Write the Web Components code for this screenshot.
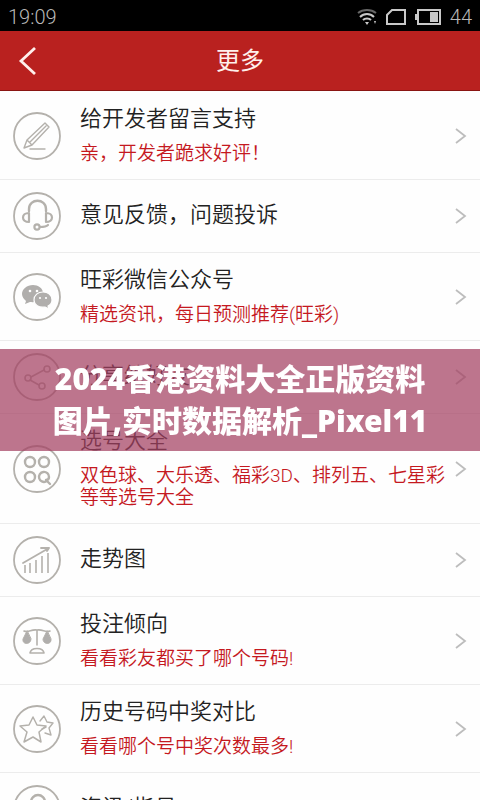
<!DOCTYPE html>
<html lang="zh-CN">
<head>
<meta charset="utf-8">
<meta name="viewport" content="width=device-width, initial-scale=1">
<title>更多</title>
<style>
  html { height: 100%; overflow: hidden; }
  body { margin: 0; height: 100%; overflow: hidden; background: #fefefe; font-family: Roboto, "Noto Sans CJK SC", sans-serif; }
</style>
</head>
<body>
<more-page></more-page>
<script>
const svg = (inner) => `<svg viewBox="0 0 48 48" fill="none" stroke="#b4b1ac" stroke-width="1.6" stroke-linecap="round" stroke-linejoin="round" aria-hidden="true"><circle cx="24" cy="24" r="23" stroke-width="1.8"/>${inner}</svg>`;
const ICONS = {
  pen: svg(`<path d="M11 36l3-8 18-17 4 4-17 18zM14 28l5 5M17 30l16-16M17 37h15" stroke-width="1.4"/>`),
  headset: svg(`<path d="M16 19v-2c0-11 17-11 17 0v2" stroke-width="2.4"/><path d="M16 21v9c-8 0-8-9 0-9zM33 21v9c8 0 8-9 0-9z" stroke-width="2.2"/><circle cx="24" cy="35" r="2.6" stroke-width="2.2"/><path d="M27 35c3 0 6 0 8-2" stroke-width="2.2"/>`),
  wechat: svg(`<g fill="#b0aeac" stroke="none"><path d="M20 12c-6 0-11 4-11 9 0 3 2 5 4 7l-1 3 5-2c8 1 13-3 13-9 0-5-5-8-10-8z"/><path stroke="#fefefe" stroke-width="1.2" d="M30 19c-5 0-9 3-9 8s5 8 11 7l4 2-1-3c2-1 4-3 4-6 0-5-4-8-9-8z"/></g><g fill="#fefefe" stroke="none"><circle cx="17" cy="18" r="1.3"/><circle cx="24" cy="18" r="1.3"/><circle cx="27" cy="25" r="1.1"/><circle cx="33" cy="25" r="1.1"/></g>`),
  share: svg(`<circle cx="15" cy="25" r="3"/><circle cx="34" cy="16" r="3"/><circle cx="29" cy="33" r="3"/><path d="M18 24l13-7M17 27l9 5"/>`),
  numbers: svg(`<g stroke-width="2.4"><circle cx="17" cy="17" r="5"/><circle cx="31" cy="17" r="5"/><circle cx="17" cy="32" r="5"/><path d="M33 36.500a5 5 0 1 1 3-4.500c0 2-1 3-3 3l4 4"/></g>`),
  trend: svg(`<path d="M10 27l26-15M28 12h8l-2 3" stroke-width="1.8"/><path d="M12 29v8M17 27v10M23 24v13M29 20v17M35 17v20" stroke-width="1.6" stroke-linecap="butt"/>`),
  scales: svg(`<path d="M11 14c5 2 7-2 13-1 6-1 8 3 13 1M24 13v15"/><g fill="#b0aeac" stroke-width="1"><path d="M14 14l-4 8c-1 6 8 6 8 0z"/><path d="M34 14l-4 8c0 6 9 6 8 0z"/></g><path d="M17 36c1-6 13-6 14 0z"/>`),
  stars: svg(`<path d="M20 12l4 8 9 1-7 6 2 10-8-5-9 5 3-10-7-6 9-1z" stroke-width="1.5"/><path d="M27 16l4-5 3 6 6 1-4 5 2 7-6-2M29 24l4-2" stroke-width="1.4"/>`),
  person: svg(`<circle cx="25" cy="17" r="7" stroke-width="2.4"/><path d="M11 38c3-14 25-14 28 0"/>`),
};

class StatusBar extends HTMLElement {
  constructor() {
    super();
    this.attachShadow({ mode: 'open' }).innerHTML = `
      <style>
        :host { display: flex; align-items: center; justify-content: space-between; height: 31px; box-sizing: border-box; padding: 2px 8px 0; background: #000; color: #b9b9b9; font: 300 20px/24px Roboto, sans-serif; }
        .right { display: flex; align-items: center; gap: 9px; }
        svg { display: block; }
      </style>
      <span>19:09</span>
      <div class="right">
        <svg width="20" height="16" viewBox="0 0 20 16" fill="none" stroke="#c9c9c9" stroke-width="2"><path d="M1 4c5-4 13-4 18 0" stroke="#666"/><path d="M3 8c4-4 10-4 14 0M6 11c2-2 6-2 8 0"/><path d="M8 13h4l-2 3zM17 12h2l-1 3z" fill="#c9c9c9" stroke="none"/></svg>
        <svg width="20" height="16" viewBox="0 0 20 16" fill="none" stroke="#c9c9c9" stroke-width="2"><path d="M6 1h13v14H1V6z"/></svg>
        <svg width="26" height="16" viewBox="0 0 26 16" fill="none" stroke="#c9c9c9" stroke-width="2"><path d="M3 1h22v14H3z"/><path d="M0 5h3v6H0zM15 3h8v10h-8z" fill="#c9c9c9" stroke="none"/></svg>
        <span>44</span>
      </div>`;
  }
}
customElements.define('status-bar', StatusBar);

class NavBar extends HTMLElement {
  constructor() {
    super();
    this.attachShadow({ mode: 'open' }).innerHTML = `
      <style>
        :host { display: grid; grid-template-columns: 56px 1fr 56px; align-items: center; height: 60px; box-sizing: border-box; background: #b9211f; border-bottom: 1px solid #8a1513; color: #fff0ec; }
        button { height: 100%; padding: 0; border: 0; background: none; color: inherit; display: grid; place-items: center; }
        h1 { margin: 0; text-align: center; font-size: 24px; line-height: 32px; font-weight: 400; }
      </style>
      <button type="button" aria-label="返回"><svg width="20" height="30" viewBox="0 0 20 30" fill="none" stroke="currentColor" stroke-width="2.8"><path d="M17 2L3 15l14 13"/></svg></button>
      <h1><slot></slot></h1>`;
  }
}
customElements.define('nav-bar', NavBar);

class MenuRow extends HTMLElement {
  connectedCallback() {
    if (this.shadowRoot) return;
    const sub = this.querySelector('[slot="sub"]') ? '<div class="sub"><slot name="sub"></slot></div>' : '';
    this.attachShadow({ mode: 'open' }).innerHTML = `
      <style>
        :host { display: block; }
        a { display: grid; grid-template-columns: 48px 1fr 12px; column-gap: 19px; align-items: center; min-height: 73px; box-sizing: border-box; padding: 11px 13px; border-bottom: 1px solid #ececec; color: #222; text-decoration: none; }
        .icon svg { display: block; width: 48px; height: 48px; }
        .text { display: grid; row-gap: 8px; min-width: 0; padding-bottom: 3px; }
        .title { font-size: 22px; line-height: 32px; font-weight: 350; }
        .sub { font-size: 19px; line-height: 22px; font-weight: 350; color: #c5191f; margin-right: -16px; }
      </style>
      <a href="#">
        <span class="icon">${ICONS[this.getAttribute('icon')]}</span>
        <div class="text"><div class="title"><slot></slot></div>${sub}</div>
        <svg width="12" height="16" viewBox="0 0 12 16" fill="none" stroke="#bdbdbd" stroke-width="1.8" aria-hidden="true"><path d="M1 1l9 7-9 7"/></svg>
      </a>`;
  }
}
customElements.define('menu-row', MenuRow);

class TitleBanner extends HTMLElement {
  constructor() {
    super();
    this.attachShadow({ mode: 'open' }).innerHTML = `
      <style>
        :host { display: block; position: fixed; left: 0; right: 0; top: 50%; transform: translateY(-50%); box-sizing: border-box; padding: 9px 48px; background: rgba(164, 64, 97, .72); color: #fff; text-align: center; font: 900 30px/42px "Noto Sans", "Noto Sans CJK SC", sans-serif; }
      </style>
      <slot></slot>`;
  }
}
customElements.define('title-banner', TitleBanner);

class MorePage extends HTMLElement {
  constructor() {
    super();
    this.attachShadow({ mode: 'open' }).innerHTML = `
      <style>
        :host { display: flex; flex-direction: column; height: 100%; overflow: hidden; }
        status-bar, nav-bar { flex: none; }
        main { flex: 1; min-height: 0; overflow: hidden; padding-top: 1px; }
      </style>
      <status-bar></status-bar>
      <nav-bar>更多</nav-bar>
      <main>
        <menu-row icon="pen">给开发者留言支持<span slot="sub">亲，开发者跪求好评！</span></menu-row>
        <menu-row icon="headset">意见反馈，问题投诉</menu-row>
        <menu-row icon="wechat">旺彩微信公众号<span slot="sub">精选资讯，每日预测推荐(旺彩)</span></menu-row>
        <menu-row icon="share">分享给好友</menu-row>
        <menu-row icon="numbers">选号大全<span slot="sub">双色球、大乐透、福彩3D、排列五、七星彩等等选号大全</span></menu-row>
        <menu-row icon="trend">走势图</menu-row>
        <menu-row icon="scales">投注倾向<span slot="sub">看看彩友都买了哪个号码!</span></menu-row>
        <menu-row icon="stars">历史号码中奖对比<span slot="sub">看看哪个号中奖次数最多!</span></menu-row>
        <menu-row icon="person">资讯/指号</menu-row>
      </main>
      <title-banner>2024香港资料大全正版资料图片,实时数据解析_Pixel11</title-banner>`;
  }
}
customElements.define('more-page', MorePage);
</script>
</body>
</html>
